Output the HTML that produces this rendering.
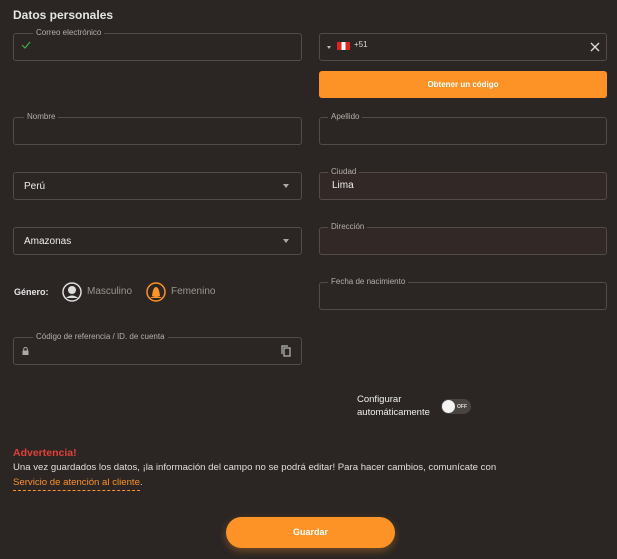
<!DOCTYPE html>
<html><head><meta charset="utf-8"><style>
*{box-sizing:border-box;margin:0;padding:0}
body{width:617px;height:559px;background:#2b2623;font-family:"Liberation Sans",sans-serif;color:#ddd;position:relative;overflow:hidden}
.a{position:absolute}
.f{position:absolute;border:1px solid #524b46;border-radius:3px;height:28px}
.lab{position:absolute;top:-6px;left:18px;font-size:8px;color:#b5afaa;background:#2b2623;padding:0 3px;line-height:10px}
.r{background:#322826}
.r .lab{background:linear-gradient(#2b2623 50%,#322826 50%)}
.val{position:absolute;left:10px;top:8px;font-size:10px;color:#eee}
.arr{position:absolute;right:12px;top:11px;width:0;height:0;border-left:3.5px solid transparent;border-right:3.5px solid transparent;border-top:4px solid #aaa}
</style></head><body>
<div class="a" style="left:13px;top:8px;font-size:12px;font-weight:bold;color:#e6e6e6">Datos personales</div>

<div class="f" style="left:13px;top:33px;width:289px"><span class="lab" style="left:19px">Correo electrónico</span>
<svg class="a" style="left:7px;top:7px" width="10" height="8" viewBox="0 0 10 8"><path d="M1 4l3 3 5-6" stroke="#3fae4a" stroke-width="1.2" fill="none"/></svg></div>

<div class="f" style="left:319px;top:33px;width:288px">
<div class="a" style="left:7px;top:12px;border-left:2.5px solid transparent;border-right:2.5px solid transparent;border-top:3px solid #bbb"></div>
<div class="a" style="left:17px;top:8px;width:13px;height:8px;background:linear-gradient(90deg,#d22 33%,#fff 33%,#fff 66%,#d22 66%)"></div>
<div class="a" style="left:34px;top:6px;font-size:8px;color:#ddd">+51</div>
<svg class="a" style="right:6px;top:8px" width="10" height="10" viewBox="0 0 10 10"><path d="M1 1l8 8M9 1l-8 8" stroke="#ddd" stroke-width="1.3"/></svg></div>

<div class="a" style="left:319px;top:71px;width:288px;height:27px;background:#fd9327;border-radius:3px;color:#fff;font-size:8px;font-weight:bold;text-align:center;line-height:27px">Obtener un código</div>

<div class="f" style="left:13px;top:117px;width:289px"><span class="lab" style="left:10px">Nombre</span></div>
<div class="f" style="left:319px;top:117px;width:288px"><span class="lab" style="left:8px">Apellido</span></div>

<div class="f" style="left:13px;top:172px;width:289px"><span class="val" style="font-size:10px">Perú</span><span class="arr"></span></div>
<div class="f r" style="left:319px;top:172px;width:288px"><span class="lab" style="left:8px">Ciudad</span><span class="val" style="left:12px;top:7px">Lima</span></div>

<div class="f" style="left:13px;top:227px;width:289px"><span class="val">Amazonas</span><span class="arr"></span></div>
<div class="f r" style="left:319px;top:227px;width:288px"><span class="lab" style="left:8px">Dirección</span></div>

<div class="a" style="left:14px;top:287px;font-size:9px;font-weight:bold;color:#e6e6e6">Género:</div>
<svg class="a" style="left:62px;top:282px" width="20" height="20" viewBox="0 0 20 20"><circle cx="10" cy="10" r="9" fill="none" stroke="#ddd" stroke-width="1.5"/><circle cx="10" cy="8" r="4" fill="#ddd"/><path d="M4 16q6-5 12 0" fill="#ddd"/></svg>
<div class="a" style="left:87px;top:286px;font-size:10px;color:#9b9590">Masculino</div>
<svg class="a" style="left:146px;top:282px" width="20" height="20" viewBox="0 0 20 20"><circle cx="10" cy="10" r="9" fill="none" stroke="#fd9327" stroke-width="1.5"/><path d="M6 14q1-9 4-9t4 9z" fill="#fd9327"/><path d="M4 16q6-4 12 0" fill="#fd9327"/></svg>
<div class="a" style="left:171px;top:286px;font-size:10px;color:#9b9590">Femenino</div>

<div class="f" style="left:319px;top:282px;width:288px"><span class="lab" style="left:8px">Fecha de nacimiento</span></div>

<div class="f" style="left:13px;top:337px;width:289px"><span class="lab" style="left:19px">Código de referencia / ID. de cuenta</span>
<svg class="a" style="left:8px;top:9px" width="7" height="8" viewBox="0 0 7 8"><rect x="0.5" y="3.5" width="6" height="4.5" fill="#aaa"/><path d="M1.7 3.5V2.3a1.8 1.8 0 013.6 0v1.2" stroke="#aaa" fill="none"/></svg>
<svg class="a" style="left:267px;top:7px" width="10" height="12" viewBox="0 0 10 12"><path d="M1 9V1h6" stroke="#bbb" fill="none" stroke-width="1.2"/><rect x="3" y="3" width="6" height="8" stroke="#bbb" fill="none" stroke-width="1.2"/></svg></div>

<div class="a" style="left:357px;top:393px;font-size:9.5px;line-height:13px;color:#eee">Configurar<br>automáticamente</div>
<div class="a" style="left:441px;top:399px;width:30px;height:15px;border-radius:8px;background:#4a4440"></div>
<div class="a" style="left:442px;top:400px;width:13px;height:13px;border-radius:50%;background:#f4f4f4"></div>
<div class="a" style="left:457px;top:404px;font-size:5px;color:#ddd;font-weight:bold">OFF</div>

<div class="a" style="left:13px;top:447px;font-size:10.5px;font-weight:bold;color:#e0403a">Advertencia!</div>
<div class="a" style="left:13px;top:462px;font-size:9.6px;color:#e0dcd8;white-space:nowrap">Una vez guardados los datos, ¡la información del campo no se podrá editar! Para hacer cambios, comunícate con</div>
<div class="a" style="left:13px;top:477px;font-size:9.6px;color:#e0dcd8"><span style="color:#fd9327;border-bottom:1px dashed #fd9327;padding-bottom:2px">Servicio de atención al cliente</span>.</div>

<div class="a" style="left:226px;top:517px;width:169px;height:31px;border-radius:16px;background:#fd9327;box-shadow:0 3px 8px rgba(253,147,39,.35);color:#fff;font-size:9px;font-weight:bold;text-align:center;line-height:31px">Guardar</div>
</body></html>
